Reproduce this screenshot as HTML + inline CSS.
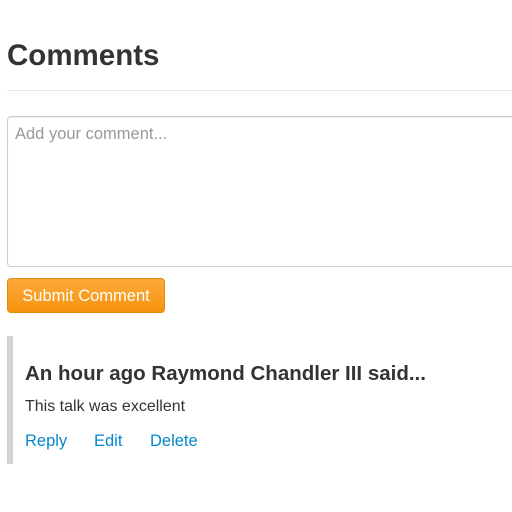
<!DOCTYPE html>
<html><head><style>
*{margin:0;padding:0;box-sizing:border-box}
body{width:512px;height:512px;overflow:hidden;background:#fff;font-family:"Liberation Sans",Arial,sans-serif;color:#333;position:relative}
.a{position:absolute;white-space:nowrap}
h1{position:absolute;left:7px;top:38px;font-size:29.5px;line-height:36px;font-weight:bold;color:#333}
.hr{position:absolute;left:7px;top:90px;width:520px;height:1px;background:#e6e6e6}
.ta{position:absolute;left:7px;top:116px;width:530px;height:151px;border:1px solid #ccc;border-radius:4px;box-shadow:inset 0 1px 1px rgba(0,0,0,.075)}
.ph{left:15px;top:124px;font-size:16.5px;line-height:20px;color:#999}
.btn{position:absolute;left:7px;top:278px;width:158px;height:35px;border-radius:4px;border:1px solid #e08a0e;background:linear-gradient(#fbaa3a,#f7930e);color:#fff;font-size:16.5px;line-height:34px;text-align:center}
.bar{position:absolute;left:7px;top:336px;width:6px;height:128px;background:#d4d4d4}
.h3{left:25px;top:361px;font-size:20.5px;line-height:26px;font-weight:bold;color:#333}
.p{left:25px;top:397px;font-size:16px;line-height:20px;color:#333}
.l{top:431px;font-size:16.5px;line-height:20px;color:#0088cc}
</style></head><body>
<h1>Comments</h1>
<div class="hr"></div>
<div class="ta"></div>
<div class="a ph">Add your comment...</div>
<div class="btn">Submit Comment</div>
<div class="bar"></div>
<div class="a h3">An hour ago Raymond Chandler III said...</div>
<div class="a p">This talk was excellent</div>
<div class="a l" style="left:25px">Reply</div>
<div class="a l" style="left:94px">Edit</div>
<div class="a l" style="left:150px">Delete</div>
</body></html>
